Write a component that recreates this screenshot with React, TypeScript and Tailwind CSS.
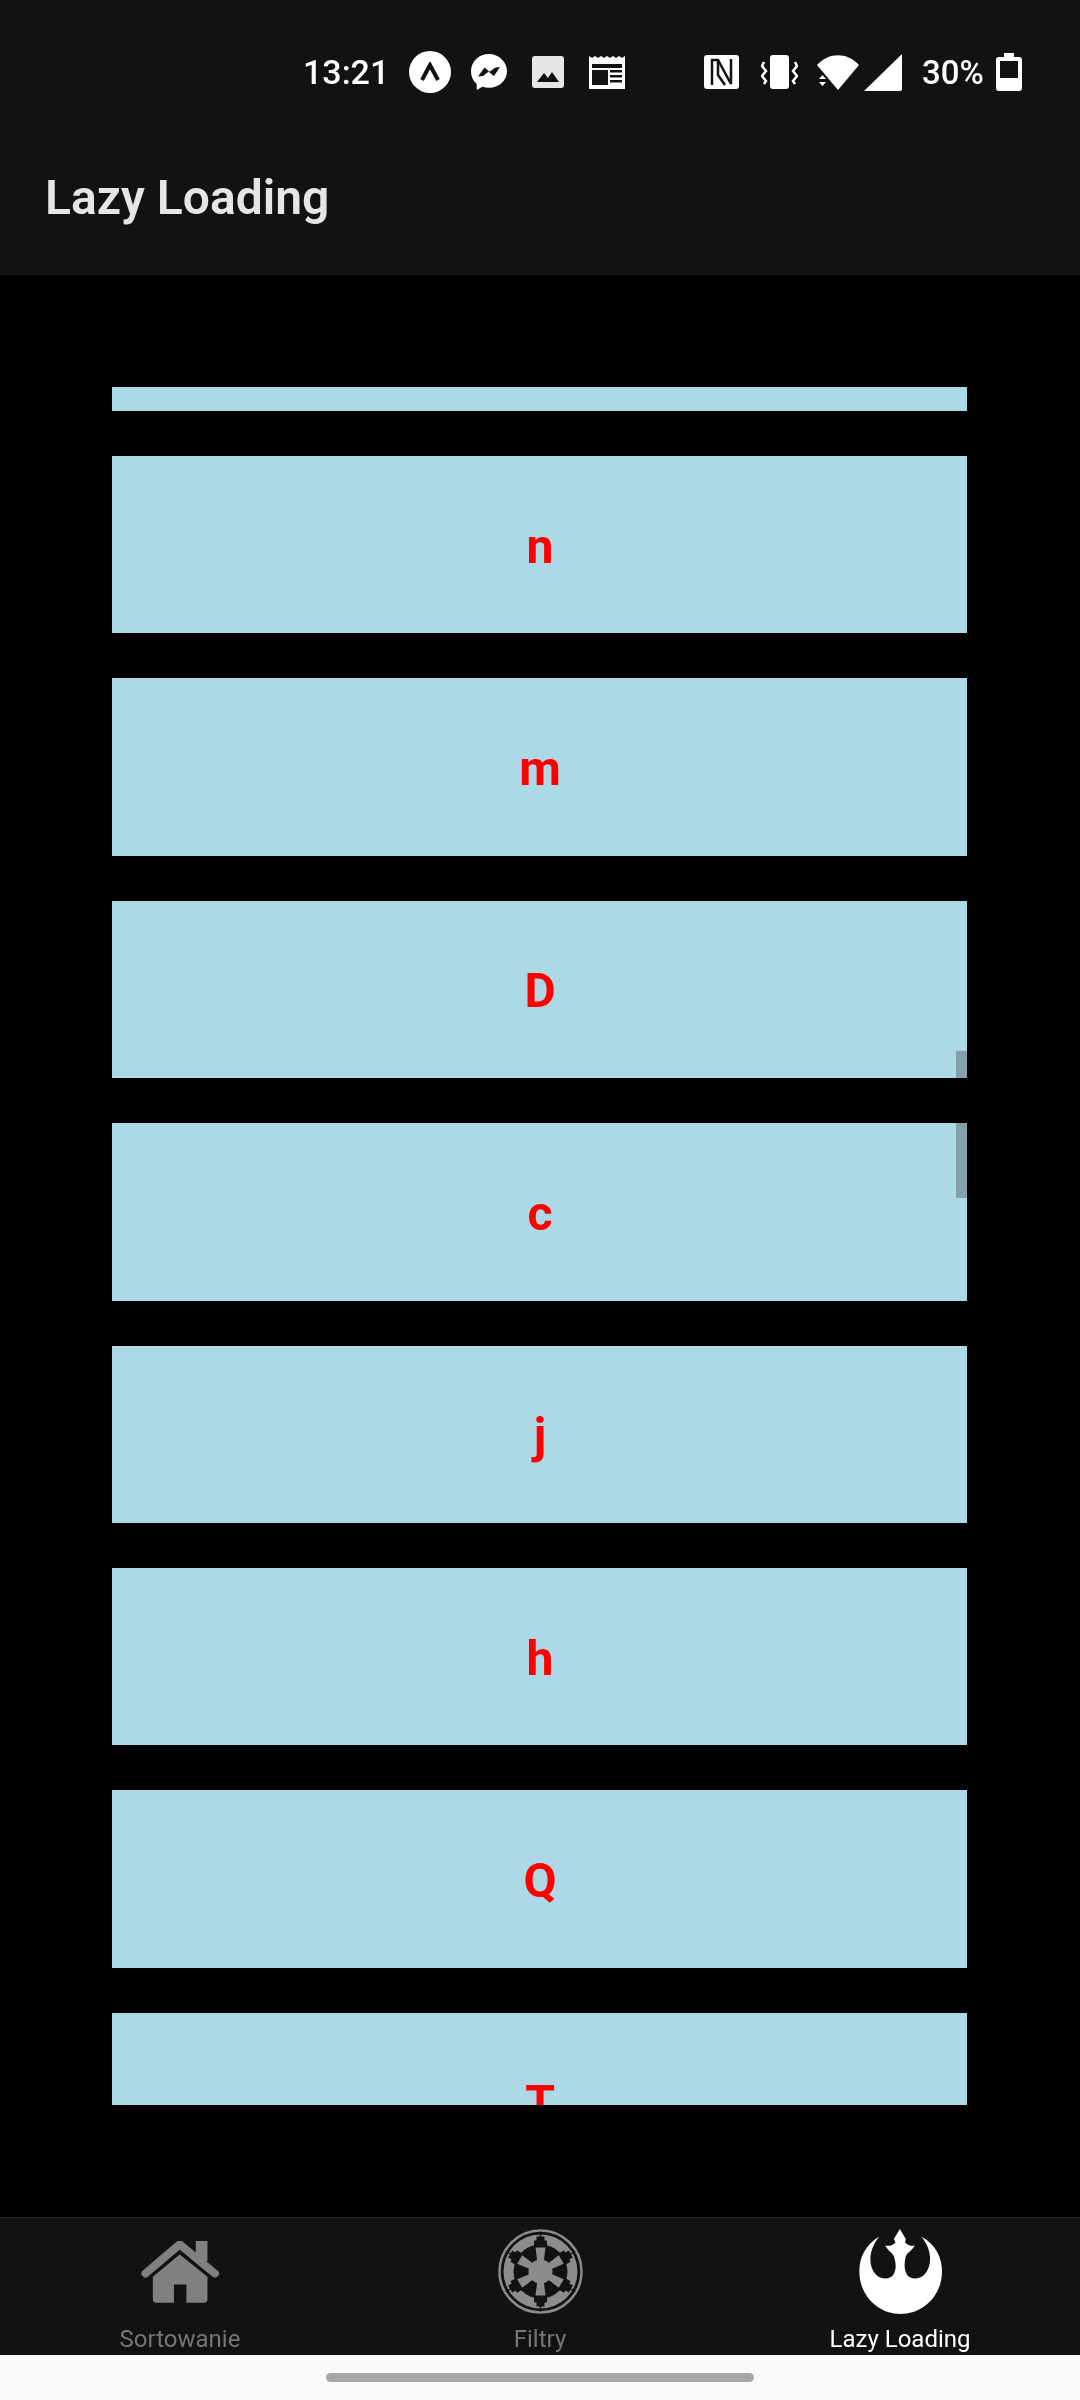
import React from 'react';

const letters = ['n', 'm', 'D', 'c', 'j', 'h', 'Q', 'T'];

const MessengerIcon = () => (
  <svg width="36" height="36" viewBox="0 0 36 36" className="ml-[20px]">
    <path d="M18 0C8 0 0 7.400 0 17.200c0 5.200 2.200 9.600 5.700 12.700V36l5.700-3.200c2.100.6 4.300.9 6.600.9 10 0 18-7.300 18-16.500S28 0 18 0z" fill="#fff" />
    <path d="M7 22.500l6.500-9 5 4.300 6-4.300L29 13l-6 9-5.500-4.300-5.500 4.300z" fill="#121212" />
  </svg>
);

const ImageIcon = () => (
  <svg width="32" height="32" viewBox="0 0 32 32" className="ml-[25px]">
    <rect width="32" height="32" rx="3" fill="#e6e6e6" />
    <path d="M5 26l7-9 4 5 4-6 7 10z" fill="#121212" />
  </svg>
);

const NewsIcon = () => (
  <svg width="36" height="33" viewBox="0 0 36 33" className="ml-[25px]">
    <path d="M0 0l3 2 3-2 3 2 3-2 3 2 3-2 3 2 3-2 3 2 3-2 3 2 3-2v33H0z" fill="#fff" />
    <path d="M3 8h30v4H3zM3 14h16v15H3zM21 14h12v2.500H21zM21 19h12v2.500H21zM21 24h12v2.500H21z" fill="#121212" />
  </svg>
);

const NfcIcon = () => (
  <svg width="35" height="34" viewBox="0 0 35 34" className="ml-[79px]">
    <rect width="35" height="34" rx="3" fill="#fff" />
    <path d="M8 30V5h6l13 24V4" fill="none" stroke="#121212" strokeWidth="2.500" />
    <path d="M14 5v15l7 10" fill="none" stroke="#121212" strokeWidth="2.500" />
  </svg>
);

const VibrateIcon = () => (
  <svg width="37" height="34" viewBox="0 0 37 34" className="ml-[22px]">
    <rect x="9" width="19" height="34" rx="3" fill="#fff" />
    <path d="M3 7L1 11l4 5-4 5 4 5-2 3M34 7l2 4-4 5 4 5-4 5 2 3" fill="none" stroke="#fff" strokeWidth="2.500" />
  </svg>
);

const WifiIcon = () => (
  <svg width="42" height="35" viewBox="0 0 42 35" className="ml-[19px]">
    <path d="M0 10C12-3 30-3 42 10L21 35z" fill="#fff" />
    <path d="M2 24l3.500-4 3.500 4zM2 27h7l-3.500 4z" fill="#fff" />
  </svg>
);

const SignalIcon = () => (
  <svg width="38" height="37" viewBox="0 0 38 37" className="ml-[5px]">
    <path d="M38 0v35a2 2 0 0 1-2 2H0z" fill="#fff" />
  </svg>
);

const BatteryIcon = () => (
  <svg width="26" height="38" viewBox="0 0 26 38" className="ml-[12px]">
    <path d="M8 0h10v4h5a3 3 0 0 1 3 3v28a3 3 0 0 1-3 3H3a3 3 0 0 1-3-3V7a3 3 0 0 1 3-3h5z" fill="#fff" />
    <rect x="4" y="8" width="18" height="17" fill="#121212" />
  </svg>
);

const HomeIcon = () => (
  <svg width="78" height="62" viewBox="65 98 232 185">
    <path d="M228 98h35v60h-35z" fill="#808080" />
    <path d="M78 195L180 108l105 87" fill="none" stroke="#808080" strokeWidth="24" strokeLinecap="round" strokeLinejoin="round" />
    <path d="M180 138l83 67v67q0 10-10 10h-53v-54h-37v54h-53q-10 0-10-10v-67z" fill="#808080" />
  </svg>
);

const ImperialIcon = () => (
  <svg width="85" height="85" viewBox="-42.500 -42.500 85 85">
    <circle r="41" fill="none" stroke="#8c8c8c" strokeWidth="2.500" />
    <circle r="37" fill="#8c8c8c" />
    <circle r="27" fill="#121212" />
    {[0, 60, 120, 180, 240, 300].map((a) => (
      <g key={a} transform={`rotate(${a})`}>
        <rect x="-6.500" y="-31" width="13" height="6" fill="#121212" />
        <rect x="-4" y="-35" width="8" height="5" fill="#121212" />
        <rect x="-0.700" y="-40" width="1.400" height="6" fill="#121212" />
      </g>
    ))}
    {[0, 60, 120, 180, 240, 300].map((a) => (
      <path key={a} transform={`rotate(${a})`} d="M-3-8L-5-24H5L3-8z" fill="#8c8c8c" />
    ))}
    <circle r="12" fill="#8c8c8c" />
  </svg>
);

const RebelIcon = () => (
  <svg width="85" height="85" viewBox="85 62 254 258">
    <path
      d="M148 85C105 110 87 150 87 190C87 265 145 320 212 320C280 320 338 265 338 190C338 150 320 110 275 85C305 120 312 170 285 200C270 216 240 218 230 198C222 180 224 165 228 145C232 135 245 128 256 112C245 115 235 112 226 103L228 92L210 62L192 92L197 103C188 112 178 115 165 112C175 128 188 135 192 145C198 165 200 180 192 198C182 218 152 216 137 200C110 170 118 120 148 85Z"
      fill="#fff"
    />
  </svg>
);

const tabs = [
  { label: 'Sortowanie', icon: <HomeIcon />, active: false },
  { label: 'Filtry', icon: <ImperialIcon />, active: false },
  { label: 'Lazy Loading', icon: <RebelIcon />, active: true },
];

export default function App() {
  return (
    <div className="flex h-[2400px] w-[1080px] flex-col bg-black font-['Roboto',sans-serif]">
      {/* Status bar + title */}
      <div className="h-[275px] shrink-0 bg-[#121212]">
        <div className="flex h-[144px] items-center pl-[303px]">
          <span className="w-[80px] whitespace-nowrap text-[34px] font-medium leading-none text-white">13:21</span>
          <div className="ml-[26px] flex h-[42px] w-[42px] items-center justify-center rounded-full bg-white">
            <svg width="20" height="20" viewBox="0 0 20 20">
              <path d="M2 18L10 3l8 15" fill="none" stroke="#121212" strokeWidth="4" />
            </svg>
          </div>
          <MessengerIcon />
          <ImageIcon />
          <NewsIcon />
          <NfcIcon />
          <VibrateIcon />
          <WifiIcon />
          <SignalIcon />
          <span className="ml-[20px] text-[33px] font-medium leading-none text-white">30%</span>
          <BatteryIcon />
        </div>
        <h1 className="pl-[45px] pt-[26px] text-[48px] font-semibold leading-[56px] text-[#e6e6e6]">Lazy Loading</h1>
      </div>

      {/* Scrolled list, clipped top and bottom */}
      <div className="min-h-0 flex-1 pb-[112px] pl-[112px] pr-[113px] pt-[112px]">
        <div className="relative h-full overflow-hidden">
          <div className="-mt-[153px] flex flex-col gap-[45px]">
            <div className="h-[177px] bg-[#add8e6]" />
            {letters.map((l) => (
              <div key={l} className="flex h-[177.400px] items-center justify-center bg-[#add8e6] pl-[1px] pt-[4px]">
                <span className="text-[48px] font-bold leading-none text-[#ff0000]">{l}</span>
              </div>
            ))}
          </div>
          {/* overlay scrollbar */}
          <div className="absolute right-0 top-[664px] h-[147px] w-[11px] bg-[#c2bdbd] mix-blend-multiply" />
        </div>
      </div>

      {/* Tab bar */}
      <div className="flex h-[138px] shrink-0 border-t border-[#222222] bg-[#121212]">
        {tabs.map((t) => (
          <div key={t.label} className="flex w-[360px] flex-col items-center">
            <div className="flex h-[107px] items-center justify-center">{t.icon}</div>
            <span className={`text-[24px] leading-[28px] ${t.active ? 'text-white' : 'text-[#757575]'}`}>{t.label}</span>
          </div>
        ))}
      </div>

      {/* Gesture bar */}
      <div className="flex h-[45px] shrink-0 justify-center bg-[#fafafa] pt-[18px]">
        <div className="h-[9px] w-[428px] rounded-full bg-[#a8a8a8]" />
      </div>
    </div>
  );
}
